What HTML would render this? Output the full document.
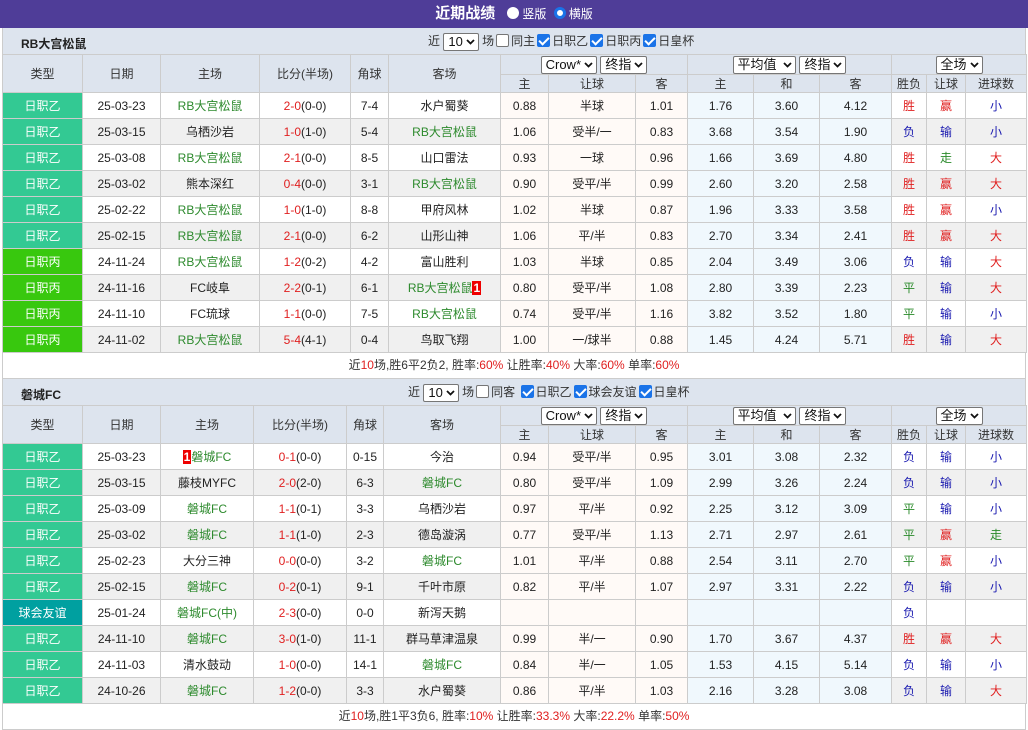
<!DOCTYPE html>
<html><head><meta charset="utf-8">
<style>
*{box-sizing:border-box}
body{margin:0;width:1028px;height:730px;overflow:hidden;background:#fff;font-family:"Liberation Sans","Noto Sans CJK SC",sans-serif;font-size:12px;color:#222}
.top{height:28px;background:#4f3d98;color:#fff;text-align:center;font-size:15px;font-weight:bold;line-height:28px}
.top .r{font-weight:normal;font-size:12px;margin-left:4px}
.rad{display:inline-block;width:12px;height:12px;border-radius:50%;background:#fff;vertical-align:-1px;margin-right:3px;margin-left:4px}
.rad.on{background:#fff;border:3px solid #1a73e8;box-shadow:0 0 0 1px #fff inset}
.bar{position:relative;height:26px;background:#dde4ee;margin:0 2px;border-left:1px solid #ccc;border-right:1px solid #ccc}
.bar .t{position:absolute;left:18px;top:7px;font-weight:bold;font-size:12px}
.bar .f{position:absolute;top:4px;font-size:12px;color:#333}
.sel{display:inline-block;height:18px;line-height:16px;border:1px solid #767676;border-radius:2px;background:#fff;padding:0 3px 0 4px;vertical-align:middle;font-size:13px;color:#111}
.sel svg{vertical-align:1px;margin-left:3px}
.cb{display:inline-block;width:13px;height:13px;border:1px solid #767676;border-radius:2px;background:#fff;vertical-align:-2px;margin:0 2px}
.cb.on{background:#1a73e8;border-color:#1a73e8;position:relative}
.cb.on:after{content:"";position:absolute;left:3px;top:0px;width:4px;height:8px;border:solid #fff;border-width:0 2px 2px 0;transform:rotate(45deg)}
table{border-collapse:collapse;table-layout:fixed;margin-left:2px;width:1024px}
td{border:1px solid #ccc;text-align:center;padding:0;white-space:nowrap;overflow:hidden;font-size:12px}
tr.h td{background:#dde4ee;color:#333}
tr.h1{height:20px}tr.h2{height:18px}
tr.d{height:26px}
tr.d:nth-child(odd) td{background:#fff}
tr.d:nth-child(even) td{background:#f0f0f0}
tr.d td.p{background:#fffaf7 !important}
tr.d td.b{background:#f0f8fd !important}
tr.d td.y{background:#33c993 !important;color:#fff}
tr.d td.z{background:#38c80e !important;color:#fff}
tr.d td.q{background:#00a0a0 !important;color:#fff}
.g{color:#2d8a2d}.rd{color:#e02020}.bl{color:#1a1ab0}.gr{color:#2a8a2a}
.n1{background:#e00;color:#fff;font-weight:bold;padding:0 1px}
.sum{height:26px;margin:0 2px;border:1px solid #ccc;border-top:none;text-align:center;line-height:25px;font-size:12px;color:#333}
.sum b{font-weight:normal;color:#e02020}
</style></head><body>
<div class="top">近期战绩 <span class="r"><span class="rad"></span>竖版 <span class="rad on"></span>横版</span></div>

<div class="bar"><span class="t">RB大宫松鼠</span><span class="f" style="left:425px">近 <span class="sel">10<svg width="9" height="6" viewBox="0 0 9 6"><path d="M1 1l3.5 3.5L8 1" stroke="#111" stroke-width="1.8" fill="none"/></svg></span> 场<span class="cb"></span>同主<span class="cb on"></span>日职乙<span class="cb on"></span>日职丙<span class="cb on"></span>日皇杯</span></div>
<table>
<colgroup><col style="width:80px"><col style="width:78px"><col style="width:99px"><col style="width:91px"><col style="width:38px"><col style="width:112px"><col style="width:48px"><col style="width:87px"><col style="width:52px"><col style="width:66px"><col style="width:66px"><col style="width:72px"><col style="width:35px"><col style="width:39px"><col style="width:61px"></colgroup>
<tr class="h h1"><td rowspan="2">类型</td><td rowspan="2">日期</td><td rowspan="2">主场</td><td rowspan="2">比分(半场)</td><td rowspan="2">角球</td><td rowspan="2">客场</td><td colspan="3"><span class="sel">Crow*<svg width="9" height="6" viewBox="0 0 9 6"><path d="M1 1l3.5 3.5L8 1" stroke="#111" stroke-width="1.8" fill="none"/></svg></span> <span class="sel">终指<svg width="9" height="6" viewBox="0 0 9 6"><path d="M1 1l3.5 3.5L8 1" stroke="#111" stroke-width="1.8" fill="none"/></svg></span></td><td colspan="3"><span class="sel">平均值 <svg width="9" height="6" viewBox="0 0 9 6"><path d="M1 1l3.5 3.5L8 1" stroke="#111" stroke-width="1.8" fill="none"/></svg></span> <span class="sel">终指<svg width="9" height="6" viewBox="0 0 9 6"><path d="M1 1l3.5 3.5L8 1" stroke="#111" stroke-width="1.8" fill="none"/></svg></span></td><td colspan="3"><span class="sel">全场<svg width="9" height="6" viewBox="0 0 9 6"><path d="M1 1l3.5 3.5L8 1" stroke="#111" stroke-width="1.8" fill="none"/></svg></span></td></tr>
<tr class="h h2"><td>主</td><td>让球</td><td>客</td><td>主</td><td>和</td><td>客</td><td>胜负</td><td>让球</td><td>进球数</td></tr>
<tr class="d"><td class="y">日职乙</td><td>25-03-23</td><td class="g">RB大宫松鼠</td><td><span class="rd">2-0</span>(0-0)</td><td>7-4</td><td>水户蜀葵</td><td class="p">0.88</td><td class="p">半球</td><td class="p">1.01</td><td class="b">1.76</td><td class="b">3.60</td><td class="b">4.12</td><td class="rd">胜</td><td class="rd">赢</td><td class="bl">小</td></tr>
<tr class="d"><td class="y">日职乙</td><td>25-03-15</td><td>乌栖沙岩</td><td><span class="rd">1-0</span>(1-0)</td><td>5-4</td><td class="g">RB大宫松鼠</td><td class="p">1.06</td><td class="p">受半/一</td><td class="p">0.83</td><td class="b">3.68</td><td class="b">3.54</td><td class="b">1.90</td><td class="bl">负</td><td class="bl">输</td><td class="bl">小</td></tr>
<tr class="d"><td class="y">日职乙</td><td>25-03-08</td><td class="g">RB大宫松鼠</td><td><span class="rd">2-1</span>(0-0)</td><td>8-5</td><td>山口雷法</td><td class="p">0.93</td><td class="p">一球</td><td class="p">0.96</td><td class="b">1.66</td><td class="b">3.69</td><td class="b">4.80</td><td class="rd">胜</td><td class="gr">走</td><td class="rd">大</td></tr>
<tr class="d"><td class="y">日职乙</td><td>25-03-02</td><td>熊本深红</td><td><span class="rd">0-4</span>(0-0)</td><td>3-1</td><td class="g">RB大宫松鼠</td><td class="p">0.90</td><td class="p">受平/半</td><td class="p">0.99</td><td class="b">2.60</td><td class="b">3.20</td><td class="b">2.58</td><td class="rd">胜</td><td class="rd">赢</td><td class="rd">大</td></tr>
<tr class="d"><td class="y">日职乙</td><td>25-02-22</td><td class="g">RB大宫松鼠</td><td><span class="rd">1-0</span>(1-0)</td><td>8-8</td><td>甲府风林</td><td class="p">1.02</td><td class="p">半球</td><td class="p">0.87</td><td class="b">1.96</td><td class="b">3.33</td><td class="b">3.58</td><td class="rd">胜</td><td class="rd">赢</td><td class="bl">小</td></tr>
<tr class="d"><td class="y">日职乙</td><td>25-02-15</td><td class="g">RB大宫松鼠</td><td><span class="rd">2-1</span>(0-0)</td><td>6-2</td><td>山形山神</td><td class="p">1.06</td><td class="p">平/半</td><td class="p">0.83</td><td class="b">2.70</td><td class="b">3.34</td><td class="b">2.41</td><td class="rd">胜</td><td class="rd">赢</td><td class="rd">大</td></tr>
<tr class="d"><td class="z">日职丙</td><td>24-11-24</td><td class="g">RB大宫松鼠</td><td><span class="rd">1-2</span>(0-2)</td><td>4-2</td><td>富山胜利</td><td class="p">1.03</td><td class="p">半球</td><td class="p">0.85</td><td class="b">2.04</td><td class="b">3.49</td><td class="b">3.06</td><td class="bl">负</td><td class="bl">输</td><td class="rd">大</td></tr>
<tr class="d"><td class="z">日职丙</td><td>24-11-16</td><td>FC岐阜</td><td><span class="rd">2-2</span>(0-1)</td><td>6-1</td><td class="g">RB大宫松鼠<span class="n1">1</span></td><td class="p">0.80</td><td class="p">受平/半</td><td class="p">1.08</td><td class="b">2.80</td><td class="b">3.39</td><td class="b">2.23</td><td class="gr">平</td><td class="bl">输</td><td class="rd">大</td></tr>
<tr class="d"><td class="z">日职丙</td><td>24-11-10</td><td>FC琉球</td><td><span class="rd">1-1</span>(0-0)</td><td>7-5</td><td class="g">RB大宫松鼠</td><td class="p">0.74</td><td class="p">受平/半</td><td class="p">1.16</td><td class="b">3.82</td><td class="b">3.52</td><td class="b">1.80</td><td class="gr">平</td><td class="bl">输</td><td class="bl">小</td></tr>
<tr class="d"><td class="z">日职丙</td><td>24-11-02</td><td class="g">RB大宫松鼠</td><td><span class="rd">5-4</span>(4-1)</td><td>0-4</td><td>鸟取飞翔</td><td class="p">1.00</td><td class="p">一/球半</td><td class="p">0.88</td><td class="b">1.45</td><td class="b">4.24</td><td class="b">5.71</td><td class="rd">胜</td><td class="bl">输</td><td class="rd">大</td></tr>
</table>
<div class="sum">近<b>10</b>场,胜6平2负2, 胜率:<b>60%</b> 让胜率:<b>40%</b> 大率:<b>60%</b> 单率:<b>60%</b></div>

<div class="bar"><span class="t">磐城FC</span><span class="f" style="left:405px">近 <span class="sel">10<svg width="9" height="6" viewBox="0 0 9 6"><path d="M1 1l3.5 3.5L8 1" stroke="#111" stroke-width="1.8" fill="none"/></svg></span> 场<span class="cb"></span>同客 <span class="cb on"></span>日职乙<span class="cb on"></span>球会友谊<span class="cb on"></span>日皇杯</span></div>
<table>
<colgroup><col style="width:80px"><col style="width:78px"><col style="width:93px"><col style="width:93px"><col style="width:37px"><col style="width:117px"><col style="width:48px"><col style="width:87px"><col style="width:52px"><col style="width:66px"><col style="width:66px"><col style="width:72px"><col style="width:35px"><col style="width:39px"><col style="width:61px"></colgroup>
<tr class="h h1"><td rowspan="2">类型</td><td rowspan="2">日期</td><td rowspan="2">主场</td><td rowspan="2">比分(半场)</td><td rowspan="2">角球</td><td rowspan="2">客场</td><td colspan="3"><span class="sel">Crow*<svg width="9" height="6" viewBox="0 0 9 6"><path d="M1 1l3.5 3.5L8 1" stroke="#111" stroke-width="1.8" fill="none"/></svg></span> <span class="sel">终指<svg width="9" height="6" viewBox="0 0 9 6"><path d="M1 1l3.5 3.5L8 1" stroke="#111" stroke-width="1.8" fill="none"/></svg></span></td><td colspan="3"><span class="sel">平均值 <svg width="9" height="6" viewBox="0 0 9 6"><path d="M1 1l3.5 3.5L8 1" stroke="#111" stroke-width="1.8" fill="none"/></svg></span> <span class="sel">终指<svg width="9" height="6" viewBox="0 0 9 6"><path d="M1 1l3.5 3.5L8 1" stroke="#111" stroke-width="1.8" fill="none"/></svg></span></td><td colspan="3"><span class="sel">全场<svg width="9" height="6" viewBox="0 0 9 6"><path d="M1 1l3.5 3.5L8 1" stroke="#111" stroke-width="1.8" fill="none"/></svg></span></td></tr>
<tr class="h h2"><td>主</td><td>让球</td><td>客</td><td>主</td><td>和</td><td>客</td><td>胜负</td><td>让球</td><td>进球数</td></tr>
<tr class="d"><td class="y">日职乙</td><td>25-03-23</td><td class="g"><span class="n1">1</span>磐城FC</td><td><span class="rd">0-1</span>(0-0)</td><td>0-15</td><td>今治</td><td class="p">0.94</td><td class="p">受平/半</td><td class="p">0.95</td><td class="b">3.01</td><td class="b">3.08</td><td class="b">2.32</td><td class="bl">负</td><td class="bl">输</td><td class="bl">小</td></tr>
<tr class="d"><td class="y">日职乙</td><td>25-03-15</td><td>藤枝MYFC</td><td><span class="rd">2-0</span>(2-0)</td><td>6-3</td><td class="g">磐城FC</td><td class="p">0.80</td><td class="p">受平/半</td><td class="p">1.09</td><td class="b">2.99</td><td class="b">3.26</td><td class="b">2.24</td><td class="bl">负</td><td class="bl">输</td><td class="bl">小</td></tr>
<tr class="d"><td class="y">日职乙</td><td>25-03-09</td><td class="g">磐城FC</td><td><span class="rd">1-1</span>(0-1)</td><td>3-3</td><td>乌栖沙岩</td><td class="p">0.97</td><td class="p">平/半</td><td class="p">0.92</td><td class="b">2.25</td><td class="b">3.12</td><td class="b">3.09</td><td class="gr">平</td><td class="bl">输</td><td class="bl">小</td></tr>
<tr class="d"><td class="y">日职乙</td><td>25-03-02</td><td class="g">磐城FC</td><td><span class="rd">1-1</span>(1-0)</td><td>2-3</td><td>德岛漩涡</td><td class="p">0.77</td><td class="p">受平/半</td><td class="p">1.13</td><td class="b">2.71</td><td class="b">2.97</td><td class="b">2.61</td><td class="gr">平</td><td class="rd">赢</td><td class="gr">走</td></tr>
<tr class="d"><td class="y">日职乙</td><td>25-02-23</td><td>大分三神</td><td><span class="rd">0-0</span>(0-0)</td><td>3-2</td><td class="g">磐城FC</td><td class="p">1.01</td><td class="p">平/半</td><td class="p">0.88</td><td class="b">2.54</td><td class="b">3.11</td><td class="b">2.70</td><td class="gr">平</td><td class="rd">赢</td><td class="bl">小</td></tr>
<tr class="d"><td class="y">日职乙</td><td>25-02-15</td><td class="g">磐城FC</td><td><span class="rd">0-2</span>(0-1)</td><td>9-1</td><td>千叶市原</td><td class="p">0.82</td><td class="p">平/半</td><td class="p">1.07</td><td class="b">2.97</td><td class="b">3.31</td><td class="b">2.22</td><td class="bl">负</td><td class="bl">输</td><td class="bl">小</td></tr>
<tr class="d"><td class="q">球会友谊</td><td>25-01-24</td><td class="g">磐城FC(中)</td><td><span class="rd">2-3</span>(0-0)</td><td>0-0</td><td>新泻天鹅</td><td class="p"></td><td class="p"></td><td class="p"></td><td class="b"></td><td class="b"></td><td class="b"></td><td class="bl">负</td><td></td><td></td></tr>
<tr class="d"><td class="y">日职乙</td><td>24-11-10</td><td class="g">磐城FC</td><td><span class="rd">3-0</span>(1-0)</td><td>11-1</td><td>群马草津温泉</td><td class="p">0.99</td><td class="p">半/一</td><td class="p">0.90</td><td class="b">1.70</td><td class="b">3.67</td><td class="b">4.37</td><td class="rd">胜</td><td class="rd">赢</td><td class="rd">大</td></tr>
<tr class="d"><td class="y">日职乙</td><td>24-11-03</td><td>清水鼓动</td><td><span class="rd">1-0</span>(0-0)</td><td>14-1</td><td class="g">磐城FC</td><td class="p">0.84</td><td class="p">半/一</td><td class="p">1.05</td><td class="b">1.53</td><td class="b">4.15</td><td class="b">5.14</td><td class="bl">负</td><td class="bl">输</td><td class="bl">小</td></tr>
<tr class="d"><td class="y">日职乙</td><td>24-10-26</td><td class="g">磐城FC</td><td><span class="rd">1-2</span>(0-0)</td><td>3-3</td><td>水户蜀葵</td><td class="p">0.86</td><td class="p">平/半</td><td class="p">1.03</td><td class="b">2.16</td><td class="b">3.28</td><td class="b">3.08</td><td class="bl">负</td><td class="bl">输</td><td class="rd">大</td></tr>
</table>
<div class="sum">近<b>10</b>场,胜1平3负6, 胜率:<b>10%</b> 让胜率:<b>33.3%</b> 大率:<b>22.2%</b> 单率:<b>50%</b></div>
</body></html>
